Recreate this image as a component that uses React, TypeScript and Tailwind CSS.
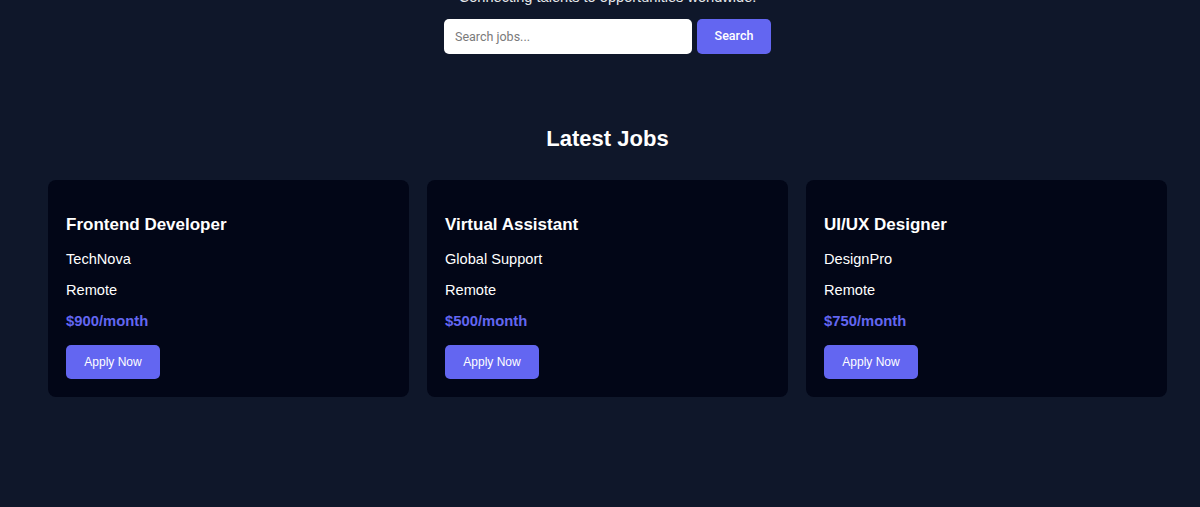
import React from "react";

const jobs = [
  { title: "Frontend Developer", company: "TechNova", location: "Remote", pay: "$900/month" },
  { title: "Virtual Assistant", company: "Global Support", location: "Remote", pay: "$500/month" },
  { title: "UI/UX Designer", company: "DesignPro", location: "Remote", pay: "$750/month" },
];

export default function App() {
  return (
    <div
      className="min-h-[507px] h-[507px] overflow-hidden bg-[#0f172a] text-white"
      style={{ fontFamily: '"Liberation Sans", Arial, sans-serif' }}
    >
      <div className="pl-[48px] pr-[33px]">
        <p className="-mt-[11px] text-center text-[14.6px] leading-[16px] text-[#e5e7eb]">
          Connecting talents to opportunities worldwide.
        </p>
        <div className="mt-[14px] flex justify-center gap-[5px]">
          <input
            type="text"
            placeholder="Search jobs..."
            className="h-[35px] w-[248px] rounded-[5px] bg-white px-[11px] text-[12.5px] text-black outline-none placeholder:text-[#7a7a7a]"
            style={{ fontFamily: 'Roboto, "Liberation Sans", sans-serif' }}
          />
          <button
            className="h-[35px] w-[74px] rounded-[5px] bg-[#6366f1] text-[12.5px] font-medium text-white"
            style={{ fontFamily: 'Roboto, "Liberation Sans", sans-serif' }}
          >
            Search
          </button>
        </div>
        <h2 className="mt-[72px] text-center text-[22px] font-bold leading-[26px]">Latest Jobs</h2>
        <div className="mt-[28px] grid grid-cols-3 gap-[18px]">
          {jobs.map((j) => (
            <div key={j.title} className="rounded-[8px] bg-[#020617] px-[18px] pb-[18px] pt-[20px]">
              <h3 className="mt-[14px] text-[17px] font-bold leading-[21px]">{j.title}</h3>
              <p className="mt-[15.5px] text-[14.6px] leading-[17px]">{j.company}</p>
              <p className="mt-[14px] text-[14.6px] leading-[17px]">{j.location}</p>
              <p className="mt-[14px] text-[14.8px] font-bold leading-[17px] text-[#6366f1]">{j.pay}</p>
              <button className="mt-[15.5px] h-[34px] w-[94px] rounded-[5px] bg-[#6366f1] text-[12px] text-white">
                Apply Now
              </button>
            </div>
          ))}
        </div>
      </div>
    </div>
  );
}
